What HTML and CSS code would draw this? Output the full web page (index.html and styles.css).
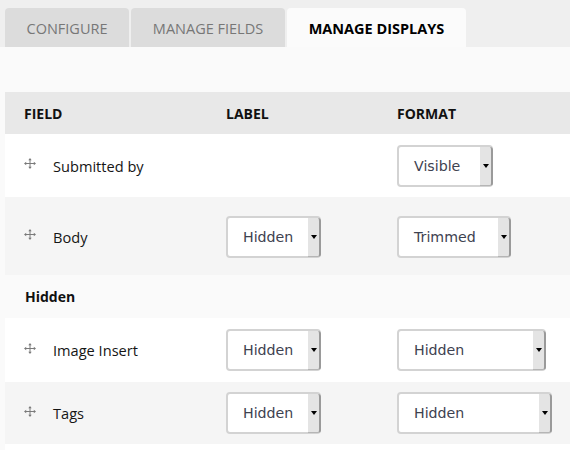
FILE: index.html
```html
<!DOCTYPE html>
<html>
<head>
<meta charset="utf-8">
<link rel="stylesheet" href="styles.css">
</head>
<body>
<div class="tabs">
  <a class="tab t1">CONFIGURE</a>
  <a class="tab t2">MANAGE FIELDS</a>
  <a class="tab t3 active">MANAGE DISPLAYS</a>
</div>
<div class="content">
  <div class="table">
    <div class="row head">
      <div class="c1">FIELD</div>
      <div class="c2">LABEL</div>
      <div class="c3">FORMAT</div>
    </div>
    <div class="row r1 white">
      <div class="c1 field"><svg class="drag" width="12" height="11" viewBox="0 0 12 11"><path d="M6 1V10M1 5.5H11" stroke="#7a7a7a" stroke-width="1"/><path d="M6 0L4.3 2.2H7.7ZM6 11L4.3 8.8H7.7ZM0 5.5L2.2 3.8V7.2ZM12 5.5L9.8 3.8V7.2Z" fill="#7a7a7a"/></svg><span>Submitted by</span></div>
      <div class="c2"></div>
      <div class="c3"><div class="sel w-visible"><span class="val">Visible</span><span class="btn"><i class="tri"></i></span></div></div>
    </div>
    <div class="row r2 grey">
      <div class="c1 field"><svg class="drag" width="12" height="11" viewBox="0 0 12 11"><path d="M6 1V10M1 5.5H11" stroke="#7a7a7a" stroke-width="1"/><path d="M6 0L4.3 2.2H7.7ZM6 11L4.3 8.8H7.7ZM0 5.5L2.2 3.8V7.2ZM12 5.5L9.8 3.8V7.2Z" fill="#7a7a7a"/></svg><span>Body</span></div>
      <div class="c2"><div class="sel w-label"><span class="val">Hidden</span><span class="btn"><i class="tri"></i></span></div></div>
      <div class="c3"><div class="sel w-trim"><span class="val">Trimmed</span><span class="btn"><i class="tri"></i></span></div></div>
    </div>
    <div class="region">Hidden</div>
    <div class="row r3 white">
      <div class="c1 field"><svg class="drag" width="12" height="11" viewBox="0 0 12 11"><path d="M6 1V10M1 5.5H11" stroke="#7a7a7a" stroke-width="1"/><path d="M6 0L4.3 2.2H7.7ZM6 11L4.3 8.8H7.7ZM0 5.5L2.2 3.8V7.2ZM12 5.5L9.8 3.8V7.2Z" fill="#7a7a7a"/></svg><span>Image Insert</span></div>
      <div class="c2"><div class="sel w-label"><span class="val">Hidden</span><span class="btn"><i class="tri"></i></span></div></div>
      <div class="c3"><div class="sel w-img"><span class="val">Hidden</span><span class="btn"><i class="tri"></i></span></div></div>
    </div>
    <div class="row r4 grey">
      <div class="c1 field"><svg class="drag" width="12" height="11" viewBox="0 0 12 11"><path d="M6 1V10M1 5.5H11" stroke="#7a7a7a" stroke-width="1"/><path d="M6 0L4.3 2.2H7.7ZM6 11L4.3 8.8H7.7ZM0 5.5L2.2 3.8V7.2ZM12 5.5L9.8 3.8V7.2Z" fill="#7a7a7a"/></svg><span>Tags</span></div>
      <div class="c2"><div class="sel w-label"><span class="val">Hidden</span><span class="btn"><i class="tri"></i></span></div></div>
      <div class="c3"><div class="sel w-tags"><span class="val">Hidden</span><span class="btn"><i class="tri"></i></span></div></div>
    </div>
    <div class="row r5 white"></div>
  </div>
</div>
</body>
</html>
```

FILE: styles.css
```css
html, body {
  margin: 0;
  padding: 0;
}
body {
  background: #efefef;
  font-family: "Open Sans", "Liberation Sans", sans-serif;
  color: #1a1a1a;
  overflow: hidden;
  height: 450px;
}
.tabs {
  display: flex;
  gap: 2px;
  padding: 8px 0 0 5px;
  height: 39px;
}
.tab {
  display: flex;
  align-items: center;
  justify-content: center;
  background: #dcdcdc;
  color: #777;
  font-size: 14.5px;
  border-radius: 4px 4px 0 0;
  padding-top: 1px;
  box-sizing: border-box;
}
.t1 { width: 124px; }
.t2 { width: 154px; }
.t3 { width: 179px; }
.tab.active {
  background: #fbfbfb;
  color: #000;
  font-weight: bold;
}
.content {
  background: #fafafa;
  padding: 45px 0 0 5px;
  height: 403px;
  box-sizing: border-box;
}
.row {
  display: grid;
  grid-template-columns: 202px 171px 1fr;
  padding-left: 19px;
  align-items: center;
}
.head {
  background: #e8e8e8;
  height: 42px;
  font-weight: bold;
  font-size: 14px;
  color: #111;
}
.white { background: #fff; }
.grey { background: #f5f5f5; }
.r1 { height: 63px; }
.r2 { height: 78px; padding-top: 1px; box-sizing: border-box; }
.r3 { height: 64px; }
.r4 { height: 62px; }
.r5 { height: 10px; }
.region {
  height: 43px;
  display: flex;
  align-items: center;
  padding-left: 20px;
  font-weight: bold;
  font-size: 14px;
  color: #111;
  padding-bottom: 1px;
  box-sizing: border-box;
}
.field {
  display: flex;
  align-items: center;
  font-size: 14.6px;
  color: #151515;
}
.drag {
  display: block;
  margin-right: 17px;
  margin-bottom: 4px;
  flex: none;
}
.sel {
  display: flex;
  height: 42px;
  box-sizing: border-box;
  border: 2px solid #d3d3d3;
  border-radius: 4px;
  background: #fff;
  font-family: "DejaVu Sans", Verdana, sans-serif;
  font-size: 14.2px;
  color: #3e4250;
}
.val {
  flex: 1;
  display: flex;
  align-items: center;
  padding-left: 15px;
}
.btn {
  width: 11px;
  flex: none;
  background: #e4e4e4;
  border-right: 2px solid #9a9a9a;
  border-bottom: 1px solid #b5b5b5;
  margin: 0 -2px -1px 0;
  display: flex;
  align-items: center;
  justify-content: center;
  border-radius: 0 3px 3px 0;
}
.tri {
  width: 0;
  height: 0;
  border-left: 3px solid transparent;
  border-right: 3px solid transparent;
  border-top: 4px solid #000;
}
.w-visible { width: 96px; }
.w-label { width: 95px; }
.w-trim { width: 114px; }
.w-img { width: 149px; }
.w-tags { width: 155px; }
```
